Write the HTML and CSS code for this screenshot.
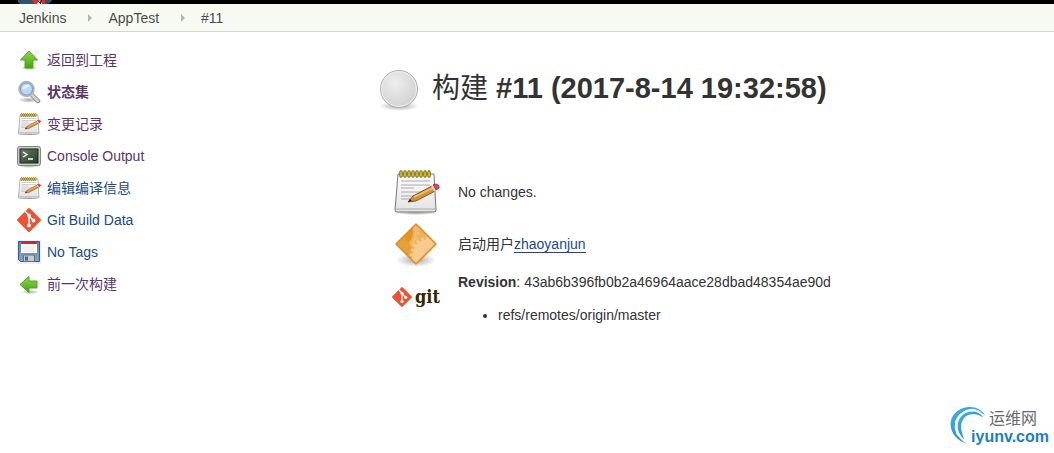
FILE: index.html
```html
<!DOCTYPE html>
<html lang="zh-CN">
<head>
    <meta charset="UTF-8">
    <meta name="viewport" content="width=device-width, initial-scale=1.0">
    <title>AppTest #11 [Jenkins]</title>
    <link rel="stylesheet" href="styles.css">
</head>
<body>
    <svg class="defs" aria-hidden="true">
        <defs>
            <linearGradient id="green" x1="0" y1="0" x2="0" y2="1">
                <stop offset="0" stop-color="#8fdc4c"/><stop offset="1" stop-color="#48a012"/>
            </linearGradient>
            <linearGradient id="paper" x1="0" y1="0" x2="0" y2="1">
                <stop offset="0" stop-color="#ffffff"/><stop offset="1" stop-color="#e2e2e2"/>
            </linearGradient>
            <linearGradient id="screen" x1="0" y1="0" x2="1" y2="1">
                <stop offset="0" stop-color="#65785c"/><stop offset="1" stop-color="#233720"/>
            </linearGradient>
            <linearGradient id="floppy" x1="0" y1="0" x2="0" y2="1">
                <stop offset="0" stop-color="#5d83b8"/><stop offset="1" stop-color="#84a5d2"/>
            </linearGradient>
            <radialGradient id="shadow">
                <stop offset="0" stop-color="#000" stop-opacity=".35"/><stop offset="1" stop-color="#000" stop-opacity="0"/>
            </radialGradient>
            <radialGradient id="ball" cx=".4" cy=".35" r=".65">
                <stop offset="0" stop-color="#eeeeee"/><stop offset="1" stop-color="#d2d2d2"/>
            </radialGradient>
            <linearGradient id="swirl" x1="0" y1="0" x2="1" y2="1">
                <stop offset="0" stop-color="#45b8ea"/><stop offset="1" stop-color="#0872b8"/>
            </linearGradient>
            <clipPath id="diamond"><path d="M24 4 44 24 24 44 4 24Z"/></clipPath>
        </defs>
        <symbol id="notepad" viewBox="0 0 48 48">
            <ellipse cx="24" cy="45" rx="22" ry="2" fill="url(#shadow)"/>
            <path d="M6 6h36l2 36q0 2-2 2H5q-2 0-2-2Z" fill="url(#paper)" stroke="#777"/>
            <path d="M4 41h39" stroke="#aaa"/>
            <path d="M9 13h29M9 17h29M9 20h13M9 24h27M9 28h20M9 31h13" stroke="#aaa"/>
            <path d="M9 4v4M13 4v4M17 4v4M21 4v4M25 4v4M29 4v4M33 4v4M37 4v4" stroke="#75620a" stroke-width="3.4" stroke-linecap="round"/>
            <path d="M9 4v4M13 4v4M17 4v4M21 4v4M25 4v4M29 4v4M33 4v4M37 4v4" stroke="#e3c62c" stroke-width="1.6" stroke-linecap="round"/>
            <path d="M16 34 21 28 40 18 43 23 24 33Z" fill="#d39339" stroke="#87551c"/>
            <path d="M22 29 41 20" stroke="#f0c070" stroke-width="1.4"/>
            <path d="M16 34 18 31 20 33Z" fill="#302010"/>
            <path d="M41 17 44 16q4 1 3 4l-3 2Z" fill="#e34750" stroke="#963340"/>
            <path d="m40 18 3 5" stroke="#d8d8d8" stroke-width="2"/>
        </symbol>
        <symbol id="git" viewBox="0 0 24 24">
            <path d="M11 .5q1-1 2 0L23.500 11q1 1 0 2L13 23.500q-1 1-2 0L.5 13q-1-1 0-2Z" fill="#f05133"/>
            <path d="M8 3 12 7.500V17.500M12 8l4.500 4.500" fill="none" stroke="#fff" stroke-width="1.500"/>
            <circle cx="12" cy="7.500" r="1.900" fill="#fff"/>
            <circle cx="16.500" cy="12.500" r="1.900" fill="#fff"/>
            <circle cx="12" cy="17.500" r="1.900" fill="#fff"/>
        </symbol>
    </svg>

    <header>
        <svg class="butler" viewBox="0 0 34 4" aria-hidden="true">
            <path d="M0 0h34l-2 3-3 1H2L0 2Z" fill="#31516b"/>
            <path d="M14 0h13v4H16Z" fill="#d92d32"/>
            <path d="m19 4 2-4 3 4Z" fill="#eee"/>
            <path d="m20 1 3 3M24 0l-2 3" stroke="#222"/>
        </svg>
    </header>

    <nav class="breadcrumbs">
        <a href="#">Jenkins</a>
        <span class="arrow"></span>
        <a href="#">AppTest</a>
        <span class="arrow"></span>
        <a href="#">#11</a>
    </nav>

    <div class="page">
        <nav class="tasks">
            <a class="task visited" href="#">
                <svg class="icon" viewBox="0 0 24 24">
                    <ellipse cx="12" cy="20" rx="9" ry="2" fill="url(#shadow)"/>
                    <path d="M12 3 20.500 12H16v8H8v-8H3.500Z" fill="url(#green)" stroke="#4ca51c"/>
                </svg>
                返回到工程
            </a>
            <a class="task visited current" href="#">
                <svg class="icon" viewBox="0 0 24 24">
                    <ellipse cx="12" cy="20" rx="11" ry="3" fill="url(#shadow)"/>
                    <path d="m15 15 6 6" stroke="#888" stroke-width="4.500" stroke-linecap="round"/>
                    <path d="m15 15 6 6" stroke="#d5d5d5" stroke-width="2.500" stroke-linecap="round"/>
                    <circle cx="9.500" cy="9" r="7.300" fill="#b3d3f2" stroke="#b5b5b5" stroke-width="2"/>
                    <circle cx="9.500" cy="9" r="6" fill="#bad8f5" stroke="#6b9fd2"/>
                    <path d="M5 9q1-5 8-4Q11 9 5 9Z" fill="#e2f0fd"/>
                </svg>
                状态集
            </a>
            <a class="task visited" href="#">
                <svg class="icon"><use href="#notepad"/></svg>
                变更记录
            </a>
            <a class="task visited" href="#">
                <svg class="icon" viewBox="0 0 24 24">
                    <ellipse cx="12" cy="22" rx="11" ry="2" fill="url(#shadow)"/>
                    <rect x=".5" y="2.500" width="23" height="19" rx="2" fill="#c8cbc5" stroke="#85877f"/>
                    <rect x="3" y="5" width="18" height="14" fill="url(#screen)" stroke="#22281f"/>
                    <path d="m6 8 4 2.500L6 13M11 15h5" fill="none" stroke="#fff" stroke-width="1.400"/>
                    <path d="M4 7h16M4 9h16M4 11h16M4 13h16M4 15h16M4 17h16" stroke="#dfefd4" stroke-opacity=".15" stroke-width=".5"/>
                </svg>
                Console Output
            </a>
            <a class="task" href="#">
                <svg class="icon"><use href="#notepad"/></svg>
                编辑编译信息
            </a>
            <a class="task" href="#">
                <svg class="icon"><use href="#git"/></svg>
                Git Build Data
            </a>
            <a class="task" href="#">
                <svg class="icon" viewBox="0 0 24 24">
                    <rect width="24" height="24" fill="#eeeeef"/>
                    <path d="M1.500 1.500h21v20h-19l-2-2Z" fill="url(#floppy)" stroke="#345c93"/>
                    <path d="M4 2h16v11H4Z" fill="#fff"/>
                    <path d="M4 2h16v2H4Z" fill="#e02222"/>
                    <path d="M6 7h12M6 9h12M6 11h12" stroke="#e2e2e2"/>
                    <path d="M6.500 15h11v6.500h-11Z" fill="#c9c9c5" stroke="#686e79"/>
                    <path d="M8 16.500h3v4H8Z" fill="#47679a"/>
                </svg>
                No Tags
            </a>
            <a class="task visited" href="#">
                <svg class="icon" viewBox="0 0 24 24">
                    <ellipse cx="13" cy="20" rx="9" ry="2" fill="url(#shadow)"/>
                    <path d="M3 12.500 12 4.500V9h8v7h-8v4.500Z" fill="url(#green)" stroke="#4ca51c"/>
                </svg>
                前一次构建
            </a>
        </nav>

        <main>
            <h1>
                <svg class="ball" viewBox="0 0 48 48" aria-hidden="true">
                    <ellipse cx="24" cy="40" rx="20" ry="5" fill="url(#shadow)"/>
                    <circle cx="24" cy="23" r="18.500" fill="url(#ball)" stroke="#b0b0b0"/>
                    <circle cx="24" cy="23" r="17.300" fill="none" stroke="#f0f0f0"/>
                </svg>
                <span><span class="word">构建</span> #11 (2017-8-14 19:32:58)</span>
            </h1>

            <div class="summary">
                <svg class="large-icon"><use href="#notepad"/></svg>
                <div>No changes.</div>
            </div>
            <div class="summary">
                <svg class="large-icon" viewBox="0 0 48 48">
                    <ellipse cx="24" cy="40" rx="20" ry="7" fill="url(#shadow)"/>
                    <path d="M24 4 44 24 24 44 4 24Z" fill="#efb25c"/>
                    <g clip-path="url(#diamond)">
                        <circle cx="6" cy="12" r="15" fill="#e2951f"/>
                        <circle cx="6" cy="12" r="18" fill="none" stroke="#f2bd75" stroke-width="2"/>
                        <circle cx="6" cy="12" r="20" fill="none" stroke="#f2bd75" stroke-width="3" stroke-dasharray="3 3"/>
                        <path d="M4 24 12 16 22 30 20 40Z" fill="#e8a03a"/>
                        <circle cx="38" cy="37" r="18" fill="#f7cb8e"/>
                        <circle cx="38" cy="37" r="19" fill="none" stroke="#f7cb8e" stroke-width="3" stroke-dasharray="3 2"/>
                    </g>
                    <path d="M24 4 44 24 24 44 4 24Z" fill="none" stroke="#e58a1b" stroke-width="1.500"/>
                </svg>
                <div>启动用户<a class="user" href="#">zhaoyanjun</a></div>
            </div>
            <div class="summary revision">
                <div class="git-logo">
                    <svg><use href="#git"/></svg>
                    <span>git</span>
                </div>
                <div>
                    <b>Revision</b>: 43ab6b396fb0b2a46964aace28dbad48354ae90d
                    <ul>
                        <li>refs/remotes/origin/master</li>
                    </ul>
                </div>
            </div>
        </main>
    </div>

    <div class="watermark">
        <svg viewBox="0 0 42 42" aria-hidden="true">
            <path d="M20 40C-3 34-4 8 15 2 25-1 34 3 38 10 29 2 18 2 11 9 2 18 6 34 20 40Z" fill="url(#swirl)"/>
            <path d="M16 35C4 24 9 8 22 6q9-1 14 6Q27 6 19 10 8 17 16 35Z" fill="url(#swirl)"/>
            <path d="M9 31Q1 14 17 5q10-4 17 2" fill="none" stroke="#fff"/>
        </svg>
        <span class="site">运维网</span>
        <span class="domain">iyunv.com</span>
    </div>
</body>
</html>
```
FILE: styles.css
```css
body {
    margin: 0;
    background-color: #fff;
    color: #333;
    font-family: "Liberation Sans", Arial, "Noto Sans CJK SC", sans-serif;
    font-size: 14px;
    line-height: 20px;
}
a {
    color: #204a87;
    text-decoration: none;
}
.defs {
    position: absolute;
    width: 0;
    height: 0;
}
header {
    height: 4px;
    padding-left: 18px;
    background-color: #000;
}
.butler {
    display: block;
    width: 34px;
    height: 4px;
}
.breadcrumbs {
    display: flex;
    align-items: center;
    height: 27px;
    padding-left: 19px;
    background-color: #f6faf2;
    border-bottom: 1px solid #d3d7cf;
}
.breadcrumbs a {
    color: #4d4d4d;
}
.arrow {
    margin: 0 16px 0 22px;
    border-left: 4px solid #b5b5b5;
    border-top: 4px solid transparent;
    border-bottom: 4px solid transparent;
}
.page {
    display: flex;
}
.tasks {
    flex: 0 0 363px;
    padding: 12px 0 0 17px;
    box-sizing: border-box;
}
.task {
    display: flex;
    align-items: center;
    gap: 6px;
    height: 32px;
}
.visited {
    color: #5c3566;
}
.current {
    font-weight: bold;
}
.icon {
    width: 24px;
    height: 24px;
}
main {
    flex: 1;
    padding: 32px 12px 0;
}
h1 {
    display: flex;
    align-items: center;
    gap: 9px;
    height: 48px;
    margin: 0 0 56px;
    font-size: 29px;
    line-height: 48px;
}
.ball {
    width: 48px;
    height: 48px;
    margin-top: 4px;
}
.word {
    font-size: 28px;
    font-weight: normal;
}
.summary {
    display: flex;
    align-items: center;
    gap: 18px;
    min-height: 48px;
    margin-bottom: 4px;
    padding-left: 17px;
}
.large-icon {
    width: 48px;
    height: 48px;
}
.user {
    border-bottom: 1px solid #204a87;
}
.revision {
    align-items: flex-start;
}
.git-logo {
    display: flex;
    align-items: center;
    gap: 3px;
    width: 48px;
    height: 50px;
    color: #362701;
    font-family: "DejaVu Serif Condensed", "DejaVu Serif", serif;
    font-size: 18px;
    font-weight: bold;
}
.git-logo svg {
    flex: none;
    width: 20px;
    height: 20px;
}
ul {
    margin: 13px 0;
    padding-left: 40px;
}
.watermark {
    position: absolute;
    right: 5px;
    bottom: 7px;
    display: grid;
    grid-template-columns: 22px auto;
    line-height: 18px;
}
.watermark svg {
    position: absolute;
    left: 0;
    top: -5px;
    width: 40px;
    height: 42px;
}
.site {
    grid-column: 2;
    padding-left: 18px;
    color: #666b70;
    font-size: 16px;
}
.domain {
    grid-column: 2;
    color: #1a80c4;
    font-size: 16px;
    font-weight: bold;
}
```
